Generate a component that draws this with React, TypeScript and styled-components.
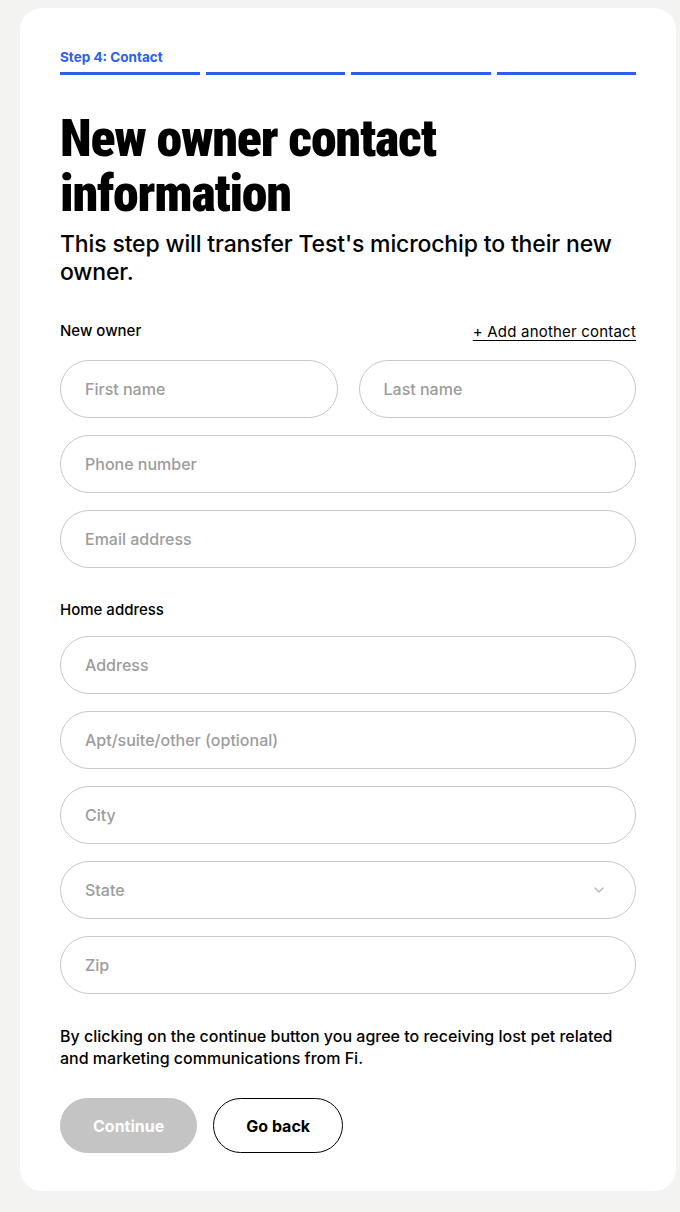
import styled, { createGlobalStyle } from "styled-components"

const GlobalStyle = createGlobalStyle`
    html, body {
        margin: 0;
        padding: 0;
        background: #f3f3f1;
    }
    * {
        box-sizing: border-box;
    }
`

const Page = styled.div`
    padding: 8px 4px 20px 20px;
    font-family: Inter, "Liberation Sans", sans-serif;
    color: #000;
`

const Card = styled.div`
    background: #fff;
    border-radius: 22px;
    padding: 40px 40px 38px;
    display: flex;
    flex-direction: column;
`

const StepLabel = styled.div`
    color: #2a5ff0;
    font-size: 13.5px;
    font-weight: 700;
    line-height: 16px;
    margin: 1px 0 7px;
`

const Progress = styled.div`
    display: grid;
    grid-template-columns: repeat(4, 1fr);
    gap: 6px;
    margin-bottom: 36px;
`

const Segment = styled.div<{ $done: boolean }>`
    height: 3px;
    background: ${(p) => (p.$done ? "#2a5ff0" : "#e2e2e2")};
`

const Title = styled.h1`
    margin: 0;
    font-family: "Liberation Sans Narrow", "Roboto Condensed", "Liberation Sans", sans-serif;
    font-size: 52px;
    font-weight: 900;
    line-height: 55px;
    letter-spacing: -1.2px;
`

const Subtitle = styled.p`
    margin: 9px 0 35px;
    font-size: 23px;
    font-weight: 500;
    line-height: 28px;
    letter-spacing: -0.15px;
`

const Header = styled.div`
    display: flex;
    align-items: center;
    justify-content: space-between;
    margin-bottom: 19px;
`

const Label = styled.div`
    font-size: 15px;
    font-weight: 500;
    line-height: 20px;
`

const SectionLabel = styled(Label)`
    margin: 32px 0 16px;
`

const AddLink = styled.a`
    font-size: 15px;
    letter-spacing: 0.2px;
    color: #000;
    text-decoration: underline;
    text-underline-offset: 3px;
    cursor: pointer;
`

const Fields = styled.div`
    display: flex;
    flex-direction: column;
    gap: 17px;
`

const Row = styled.div`
    display: grid;
    grid-template-columns: 1fr 1fr;
    gap: 21px;
`

const Input = styled.input`
    width: 100%;
    height: 58px;
    border: 1px solid #c8c8c8;
    border-radius: 29px;
    padding: 0 24px;
    font-family: inherit;
    font-size: 16px;
    font-weight: 500;
    color: #000;
    background: #fff;
    outline: none;

    &::placeholder {
        color: #9c9c9c;
    }
`

const SelectBox = styled.div`
    display: flex;
    align-items: center;
    justify-content: space-between;
    height: 58px;
    border: 1px solid #c8c8c8;
    border-radius: 29px;
    padding: 0 24px;
    font-size: 16px;
    font-weight: 500;
    color: #9c9c9c;
`

const Chevron = styled.svg`
    width: 12px;
    height: 8px;
    margin-right: 6px;
`

const Disclaimer = styled.p`
    margin: 31px 0 29px;
    font-size: 16px;
    font-weight: 500;
    line-height: 22px;
`

const Buttons = styled.div`
    display: flex;
    gap: 16px;
`

const Button = styled.button<{ $variant: "disabled" | "outline" }>`
    height: 55px;
    border-radius: 28px;
    font-family: inherit;
    font-size: 16px;
    font-weight: 700;
    padding: 0 32px;
    cursor: pointer;
    border: 1px solid ${(p) => (p.$variant === "outline" ? "#000" : "#c4c4c4")};
    background: ${(p) => (p.$variant === "outline" ? "#fff" : "#c4c4c4")};
    color: ${(p) => (p.$variant === "outline" ? "#000" : "#fff")};
`

const App = () => {
    const steps = [true, true, true, true]

    return (
        <Page>
            <GlobalStyle />
            <Card>
                <StepLabel>Step 4: Contact</StepLabel>
                <Progress>
                    {steps.map((done, index) => (
                        <Segment key={index} $done={done} />
                    ))}
                </Progress>

                <Title>New owner contact information</Title>
                <Subtitle>This step will transfer Test's microchip to their new owner.</Subtitle>

                <Header>
                    <Label>New owner</Label>
                    <AddLink>+ Add another contact</AddLink>
                </Header>

                <Fields>
                    <Row>
                        <Input placeholder="First name" />
                        <Input placeholder="Last name" />
                    </Row>
                    <Input placeholder="Phone number" />
                    <Input placeholder="Email address" />
                </Fields>

                <SectionLabel>Home address</SectionLabel>

                <Fields>
                    <Input placeholder="Address" />
                    <Input placeholder="Apt/suite/other (optional)" />
                    <Input placeholder="City" />
                    <SelectBox>
                        State
                        <Chevron viewBox="0 0 12 8">
                            <path d="M2 2l4 4 4-4" fill="none" stroke="#bdbdbd" strokeWidth="1.6" strokeLinecap="round" strokeLinejoin="round" />
                        </Chevron>
                    </SelectBox>
                    <Input placeholder="Zip" />
                </Fields>

                <Disclaimer>
                    By clicking on the continue button you agree to receiving lost pet related and marketing communications from Fi.
                </Disclaimer>

                <Buttons>
                    <Button $variant="disabled">Continue</Button>
                    <Button $variant="outline">Go back</Button>
                </Buttons>
            </Card>
        </Page>
    )
}

export default App
